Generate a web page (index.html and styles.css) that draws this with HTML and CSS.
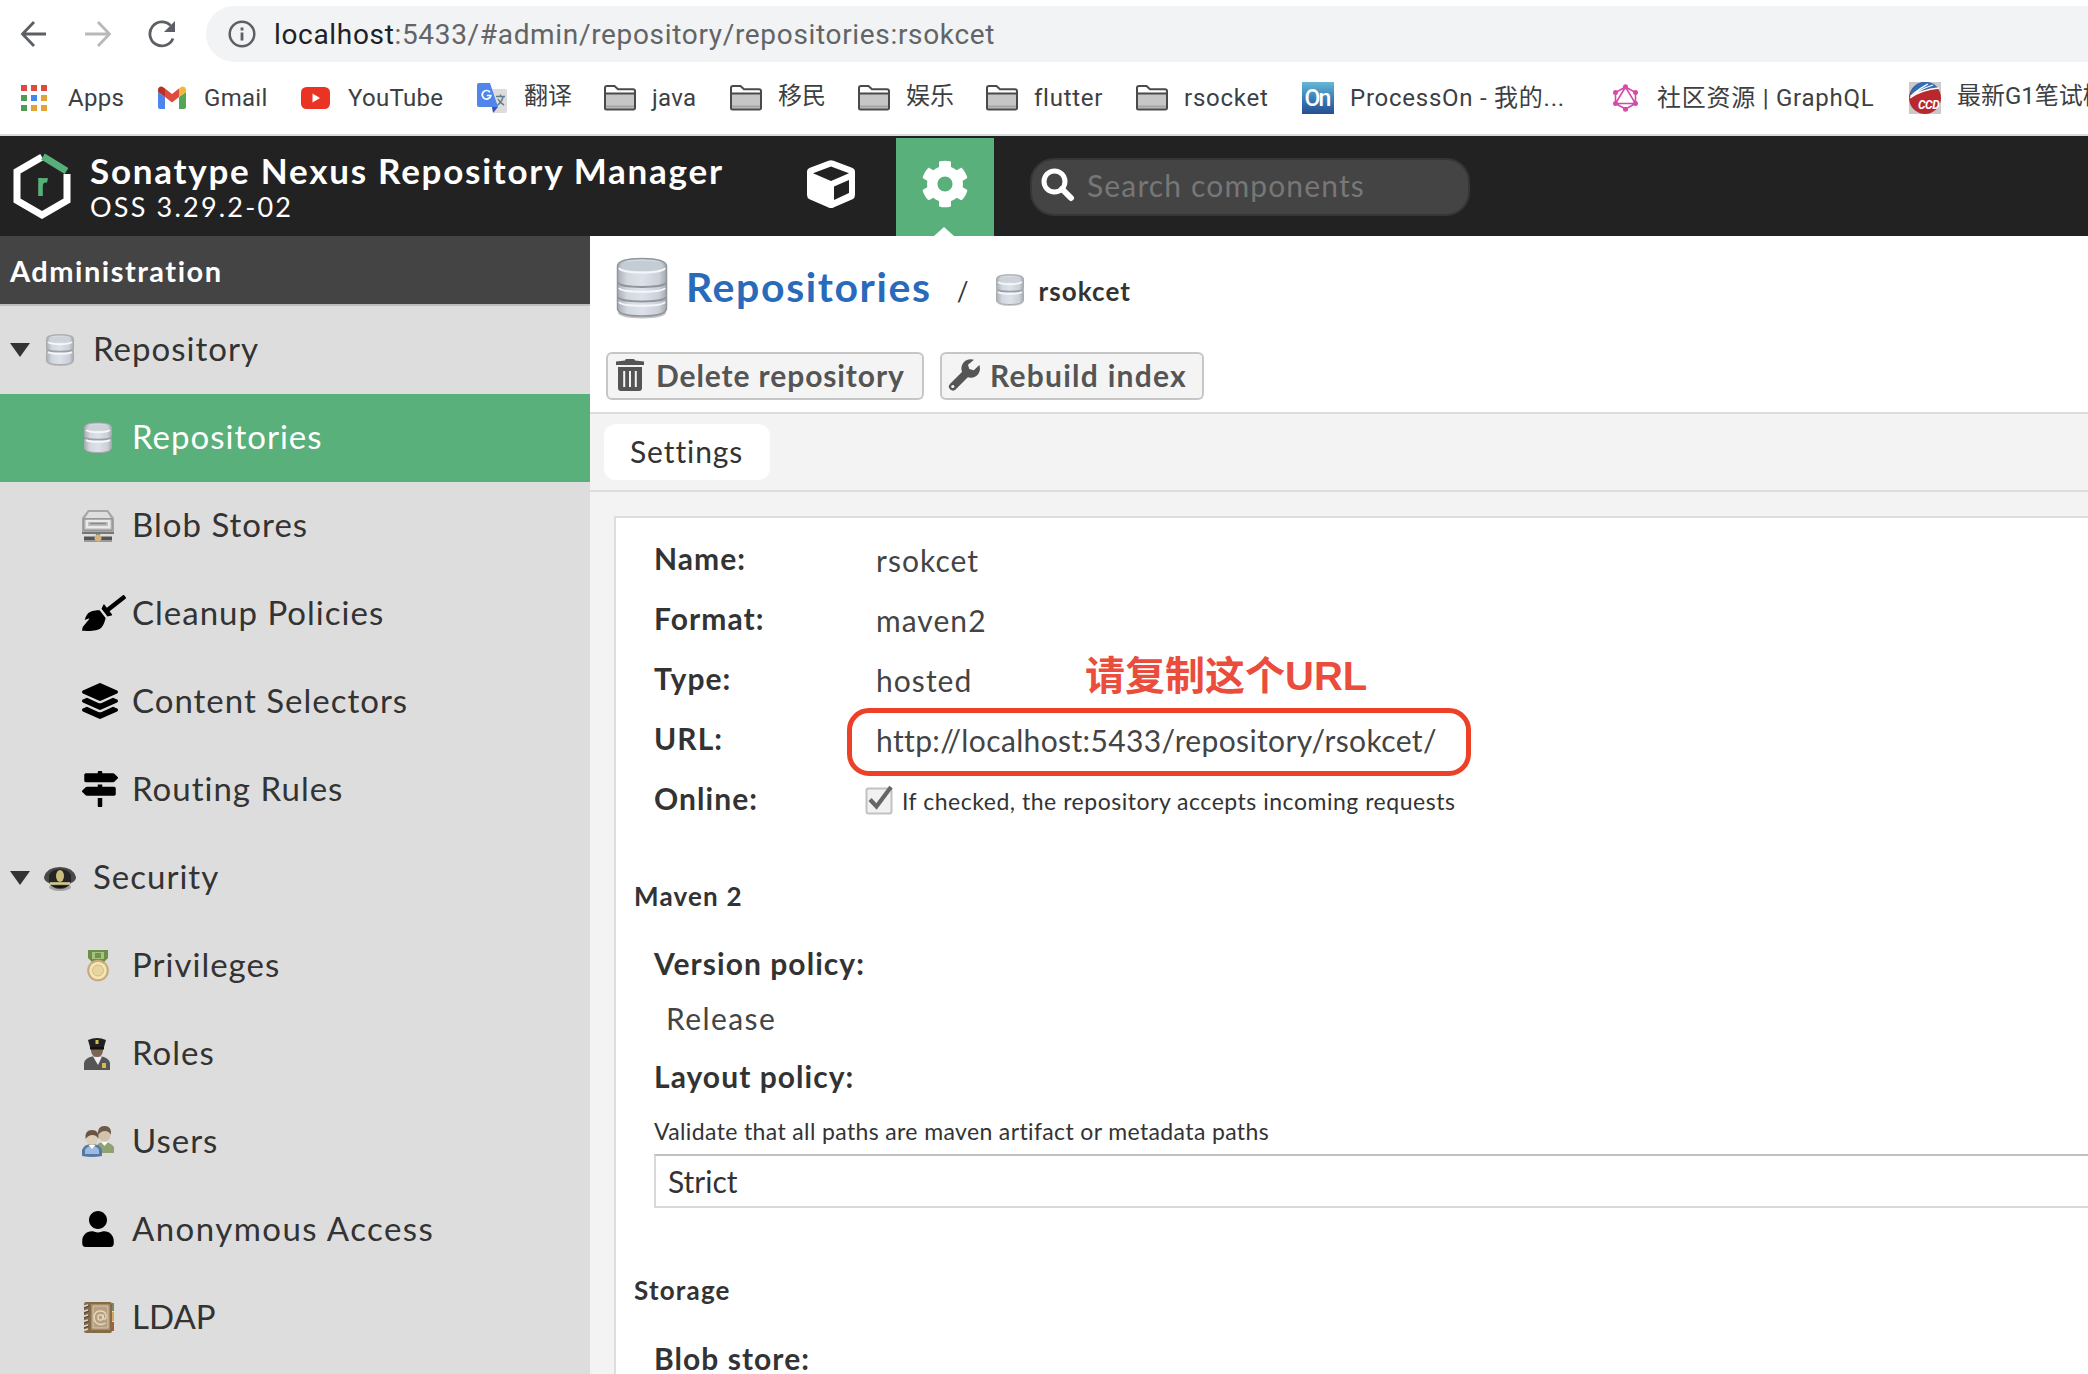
FILE: index.html
```html
<!DOCTYPE html>
<html lang="en">
<head>
<meta charset="utf-8">
<title>Repositories - Nexus Repository Manager</title>
<link rel="stylesheet" href="styles.css">
</head>
<body>
<svg class="defs" width="0" height="0">
  <defs>
    <linearGradient id="metal" x1="0" x2="1" y1="0" y2="0">
      <stop offset="0" stop-color="#a9aeb4"/><stop offset=".2" stop-color="#d3d8df"/><stop offset=".5" stop-color="#dde2ea"/><stop offset=".85" stop-color="#cbd0d8"/><stop offset="1" stop-color="#a4a9ae"/>
    </linearGradient>
    <linearGradient id="on" x1="0" x2="0" y1="0" y2="1">
      <stop offset="0" stop-color="#67b7d6"/><stop offset=".5" stop-color="#3b7fb8"/><stop offset="1" stop-color="#274e91"/>
    </linearGradient>
    <symbol id="folder" viewBox="0 0 32 26">
      <path d="M1.5 22.5V3a1.5 1.5 0 0 1 1.500-1.500h7.500l3 3.300h15.500A1.500 1.500 0 0 1 30.500 6.300v16.700a1.500 1.500 0 0 1-1.500 1.500H3a1.500 1.500 0 0 1-1.500-1.500z" fill="#fff"/>
      <path d="M1.500 9h29v15h-29z" fill="#c6c6c6"/><path d="M2 21.500h28" stroke="#a5a5a5" stroke-width="2"/>
      <path d="M1 8.500h30M1 23V3a2 2 0 0 1 2-2h7.500l3.500 3.200h15a2 2 0 0 1 2 2V23a1.500 1.500 0 0 1-1.500 1.500h-27A1.500 1.500 0 0 1 1 23z" fill="none" stroke="#4a4a4a" stroke-width="2"/>
    </symbol>
    <symbol id="db" viewBox="0 0 32 32">
      <path d="M2 4q1-4 14-4t14 4v23q-1 5-14 5T2 27z" fill="#8d9195" opacity=".45"/>
      <path d="M2.500 5.500C3 2 8 1 16 1s13 1 13.500 4.500v8q0 1.500-1 2.500 1 1 1 2.500V26c-1 3.500-6 4.500-13.500 4.500S3 29.500 2.500 26v-7.500q0-1.500 1-2.500-1-1-1-2.500z" fill="url(#metal)" stroke="#a6abae" stroke-width="1"/>
      <path d="M3.500 16c3 2 22 2 25 0" fill="none" stroke="#9ba0a6" stroke-width="1.600"/>
      <path d="M4 18c4 2.500 20 2.500 24 0M4 8c4 3 20 3 24 0" fill="none" stroke="#f4f7fb" stroke-width="1.800"/>
      <ellipse cx="16" cy="5.600" rx="11" ry="3" fill="#cdd3d8"/>
    </symbol>
    <symbol id="db-large" viewBox="0 0 52 62">
      <ellipse cx="26" cy="56" rx="24" ry="5.500" fill="#777" opacity=".45"/>
      <path d="M1.500 9C2 3 12 1.500 26 1.500S50 3 50.500 9v43c-1 5-11 7-24.500 7S2.500 57 1.500 52z" fill="url(#metal)" stroke="#90969c" stroke-width="1.500"/>
      <ellipse cx="26" cy="9" rx="21.500" ry="5.500" fill="#c5cdd4"/>
      <path d="M3 11c3 6 43 6 46 0M3 31c3 5 43 5 46 0M3 45c3 5 43 5 46 0" fill="none" stroke="#f3f6fa" stroke-width="2"/>
      <path d="M2 25.500c2 6 46 6 48 0M2 40c2 6 46 6 48 0" fill="none" stroke="#8f959b" stroke-width="2"/>
    </symbol>
  </defs>
</svg>

<div class="browser">
  <div class="toolbar">
    <svg class="nav" width="28" height="28" viewBox="0 0 28 28"><path d="M26 14H3M14 2 2.500 14 14 26" fill="none" stroke="#5c5f63" stroke-width="2.800"/></svg>
    <svg class="nav" width="28" height="28" viewBox="0 0 28 28"><path d="M1 14h23M14 2l11.500 12L14 26" fill="none" stroke="#b9b9bb" stroke-width="2.800"/></svg>
    <svg class="nav" width="28" height="28" viewBox="0 0 28 28"><path d="M25 18.500A12 12 0 1 1 22.500 5.500" fill="none" stroke="#5c5f63" stroke-width="2.800"/><path d="M27 1v11H16z" fill="#5c5f63"/></svg>
    <div class="omnibox">
      <svg width="28" height="28" viewBox="0 0 28 28"><circle cx="14" cy="14" r="12.300" fill="none" stroke="#5c5f63" stroke-width="2.500"/><path d="M14 12.500v8M14 7.500v3" stroke="#5c5f63" stroke-width="2.800"/></svg>
      <span class="url"><b>localhost</b>:5433/#admin/repository/repositories:rsokcet</span>
    </div>
  </div>
  <div class="bookmarks">
    <div class="bm"><svg width="32" height="28" viewBox="0 0 32 28"><g fill="#dd4b3e"><path d="M1 1h6v6H1zM11 1h6v6h-6zM21 1h6v6h-6z"/></g><path d="M1 11h6v6H1zM1 21h6v6H1z" fill="#4e9a57"/><path d="M11 11h6v6h-6z" fill="#4285f0"/><path d="M21 11h6v6h-6zM11 21h6v6h-6zM21 21h6v6h-6z" fill="#e2a336"/></svg><span>Apps</span></div>
    <div class="bm"><svg width="32" height="24" viewBox="0 0 32 24"><path d="M2 6l7 5v12H4a2 2 0 0 1-2-2z" fill="#4d84ee"/><path d="M30 6l-7 5v12h5a2 2 0 0 0 2-2z" fill="#53a557"/><path d="M9 2.500l7 5.500 7-5.500V11l-7 5.500L9 11z" fill="#de4b3f"/><path d="M2 4c0-3 3-4.500 5.500-2.500L9 2.500V11L2 6z" fill="#b93228"/><path d="M30 4c0-3-3-4.500-5.500-2.500L23 2.500V11l7-5z" fill="#f0b93c"/></svg><span>Gmail</span></div>
    <div class="bm"><svg width="32" height="22" viewBox="0 0 32 22"><rect x="1" width="29" height="22" rx="5.500" fill="#ea3323"/><path d="M12.500 6.500v9l7.500-4.500z" fill="#fff"/></svg><span>YouTube</span></div>
    <div class="bm"><svg width="32" height="30" viewBox="0 0 32 30"><path d="M12 6h17a2 2 0 0 1 2 2v20a2 2 0 0 1-2 2H18z" fill="#dcdcdc"/><path d="M20 13.500h9M24.500 11.500v2M27 14c-1 4-3 6.500-6 8.500M22 16c1 2 3.500 4.500 6 6" stroke="#607d8b" stroke-width="1.500" fill="none"/><path d="M16 24h6l-5 6z" fill="#3a4fb5"/><path d="M3 0h11l8 24H3a2 2 0 0 1-2-2V2a2 2 0 0 1 2-2z" fill="#5086ec"/><path d="M14 9.200a4.300 4.300 0 1 0 .8 3.300h-4" fill="none" stroke="#fff" stroke-width="1.700"/></svg><span class="cjk">翻译</span></div>
    <div class="bm"><svg width="32" height="26"><use href="#folder"/></svg><span>java</span></div>
    <div class="bm"><svg width="32" height="26"><use href="#folder"/></svg><span class="cjk">移民</span></div>
    <div class="bm"><svg width="32" height="26"><use href="#folder"/></svg><span class="cjk">娱乐</span></div>
    <div class="bm"><svg width="32" height="26"><use href="#folder"/></svg><span class="loose">flutter</span></div>
    <div class="bm"><svg width="32" height="26"><use href="#folder"/></svg><span class="loose">rsocket</span></div>
    <div class="bm"><svg width="32" height="32" viewBox="0 0 32 32"><rect width="32" height="32" fill="url(#on)"/><text x="2.500" y="23.500" class="on-text" textLength="27">On</text></svg><span class="loose">ProcessOn - 我的...</span></div>
    <div class="bm"><svg width="32" height="28" viewBox="0 0 32 28"><g fill="none" stroke="#d64aa9" stroke-width="1.600"><path d="M16.500 3l10 5.500v11l-10 5.500-10-5.500v-11zM16.500 3 6.500 19.500h20z"/></g><g fill="#d64aa9"><circle cx="16.500" cy="2.800" r="2.500"/><circle cx="26.500" cy="8.500" r="2.500"/><circle cx="26.500" cy="19.500" r="2.500"/><circle cx="16.500" cy="25.300" r="2.500"/><circle cx="6.500" cy="19.500" r="2.500"/><circle cx="6.500" cy="8.500" r="2.500"/></g></svg><span class="loose">社区资源 | GraphQL</span></div>
    <div class="bm"><svg width="32" height="32" viewBox="0 0 32 32"><rect width="32" height="32" fill="#c9c9c9"/><circle cx="16" cy="16" r="16" fill="#b8282d"/><path d="M1 14C2 5 8 0 16 0c6 0 10 2 13 6-10 0-20 3-28 8z" fill="#2e6fb8"/><path d="M1.500 14.500C8 8 14 5 19 2M6 12C12 7 18 5 24 3M1 16C10 9 20 7 30 6" stroke="#fff" stroke-width="1.300" fill="none"/><text x="9" y="27" class="ccd-text" textLength="22">CCD</text></svg><span class="cjk">最新G1笔试模</span></div>
  </div>
</div>

<header class="header">
  <svg class="logo" width="58" height="66" viewBox="0 0 58 66"><path d="M29 4 4 18.500v29L29 62l25-14.500V21" fill="none" stroke="#fff" stroke-width="7"/><path d="M30 3.500 53.500 18" stroke="#57b07a" stroke-width="7"/><path d="M27.500 25v18M27.500 33c0-4.500 3-6.500 7-5.500" fill="none" stroke="#57b07a" stroke-width="4.600"/></svg>
  <div class="brand">
    <span class="brand-name">Sonatype Nexus Repository Manager</span>
    <span class="brand-version">OSS 3.29.2-02</span>
  </div>
  <div class="mode">
    <svg width="48" height="48" viewBox="0 0 48 48"><path d="M21.500.7a6 6 0 0 1 5 0l18.500 7A4.500 4.500 0 0 1 48 12v23a5 5 0 0 1-2.500 4.300L27 47.300a6 6 0 0 1-6 0L2.500 39.300A5 5 0 0 1 0 35V12a4.500 4.500 0 0 1 3-4.300zM24 6.500 6 13.300 24 21l18-7.700zM27 26.500V40l15-7V20z" fill="#fff" fill-rule="evenodd"/></svg>
  </div>
  <div class="mode active">
    <svg width="48" height="48" viewBox="0 0 512 512"><path fill="#fff" d="M487.400 315.700l-42.600-24.600c4.300-23.200 4.300-47 0-70.200l42.600-24.600c4.900-2.800 7.100-8.600 5.500-14-11.100-35.600-30-67.800-54.700-94.600-3.800-4.100-10-5.100-14.800-2.300L380.800 110c-17.900-15.400-38.500-27.300-60.800-35.100V25.800c0-5.600-3.900-10.500-9.400-11.700-36.700-8.200-74.300-7.800-109.200 0-5.500 1.200-9.400 6.100-9.400 11.700V75c-22.200 7.900-42.800 19.800-60.800 35.100L88.700 85.500c-4.900-2.800-11-1.900-14.800 2.300-24.700 26.700-43.600 58.900-54.700 94.600-1.700 5.400.6 11.200 5.500 14L67.300 221c-4.300 23.200-4.300 47 0 70.200l-42.600 24.600c-4.900 2.800-7.100 8.600-5.500 14 11.100 35.600 30 67.800 54.700 94.600 3.800 4.100 10 5.100 14.800 2.300l42.600-24.600c17.900 15.400 38.500 27.300 60.800 35.100v49.200c0 5.600 3.900 10.500 9.400 11.700 36.700 8.200 74.300 7.800 109.200 0 5.500-1.200 9.400-6.100 9.400-11.700v-49.200c22.200-7.900 42.800-19.800 60.800-35.100l42.600 24.600c4.900 2.800 11 1.900 14.800-2.300 24.700-26.700 43.600-58.900 54.700-94.600 1.500-5.500-.7-11.300-5.600-14.100zM256 336c-44.100 0-80-35.900-80-80s35.900-80 80-80 80 35.900 80 80-35.900 80-80 80z"/></svg>
  </div>
  <div class="search">
    <svg width="34" height="34" viewBox="0 0 34 34"><circle cx="13.500" cy="13.500" r="10.500" fill="none" stroke="#fff" stroke-width="5"/><path d="M21 21l9 9" stroke="#fff" stroke-width="6" stroke-linecap="round"/></svg>
    <span>Search components</span>
  </div>
</header>

<div class="page">
  <nav class="sidebar">
    <div class="side-title">Administration</div>
    <div class="row group"><i class="arrow"></i><svg width="32" height="32"><use href="#db"/></svg><span>Repository</span></div>
    <div class="row selected"><svg width="32" height="32"><use href="#db"/></svg><span>Repositories</span></div>
    <div class="row"><svg width="32" height="32" viewBox="0 0 32 32"><path d="M6 0h20l6 8v14H0V8z" fill="#a6a6a6"/><path d="M7 2h18l4 6H3z" fill="#dedede"/><path d="M2 9h28v11H2z" fill="#cfcfcf" stroke="#8b8b8b"/><path d="M5 11h22v6H5z" fill="#bdbdbd" stroke="#f3f3f3" stroke-width="1.500"/><path d="M8 13.500h16" stroke="#888" stroke-width="1.500"/><path d="M0 22h32v2H0zM14 23h4v4h-4z" fill="#777"/><path d="M2 26.500h28v4H2z" fill="#555"/><path d="M2 30.500h28V32H2z" fill="#999"/><circle cx="16" cy="28" r="3.500" fill="#cfb47c"/></svg><span>Blob Stores</span></div>
    <div class="row"><svg class="up" width="44" height="36" viewBox="0 0 640 512" preserveAspectRatio="none"><path d="M256.470 216.770l86.730 109.180s-16.600 102.360-76.570 150.120C206.660 523.850 0 510.190 0 510.190s3.800-23.140 11-55.430l94.620-112.170c3.970-4.700-.87-11.620-6.650-9.500l-60.400 22.090c14.440-41.660 32.720-80.040 54.600-97.470 59.970-47.760 163.300-40.940 163.300-40.940zM636.530 31.030l-19.860-25c-5.490-6.900-15.520-8.050-22.410-2.560l-232.480 177.800-34.140-42.970c-5.090-6.410-15.140-5.210-18.590 2.210l-25.330 54.550 86.730 109.180 58.800-12.450c8-1.690 11.420-11.200 6.340-17.600l-34.090-42.920 232.480-177.800c6.890-5.480 8.040-15.530 2.550-22.440z"/></svg><span>Cleanup Policies</span></div>
    <div class="row"><svg class="up" width="36" height="36" viewBox="0 0 512 512"><path d="M12.410 148.020l232.940 105.670c6.800 3.090 14.490 3.090 21.290 0l232.940-105.670c16.550-7.510 16.550-32.520 0-40.030L266.650 2.310a25.607 25.607 0 0 0-21.290 0L12.410 107.980c-16.550 7.510-16.550 32.530 0 40.040zm487.180 88.280l-58.090-26.330-161.640 73.270c-7.560 3.430-15.590 5.170-23.860 5.170s-16.290-1.740-23.860-5.170L70.510 209.970l-58.100 26.330c-16.550 7.500-16.550 32.500 0 40l232.940 105.590c6.800 3.080 14.490 3.080 21.290 0L499.590 276.300c16.550-7.500 16.550-32.500 0-40zm0 127.800l-57.870-26.230-161.860 73.370c-7.560 3.430-15.590 5.170-23.860 5.170s-16.290-1.740-23.860-5.170L70.290 337.870 12.410 364.100c-16.550 7.500-16.550 32.500 0 40l232.940 105.590c6.800 3.080 14.490 3.080 21.290 0L499.590 404.100c16.550-7.500 16.550-32.500 0-40z"/></svg><span>Content Selectors</span></div>
    <div class="row"><svg class="up" width="36" height="36" viewBox="0 0 512 512"><path d="M507.310 84.690L464 41.370c-6-6-14.140-9.370-22.630-9.370H288V16c0-8.840-7.160-16-16-16h-32c-8.840 0-16 7.160-16 16v16H56c-13.250 0-24 10.750-24 24v80c0 13.250 10.750 24 24 24h385.370c8.490 0 16.620-3.370 22.630-9.370l43.310-43.310c6.250-6.260 6.250-16.380 0-22.630zM224 496c0 8.840 7.160 16 16 16h32c8.840 0 16-7.160 16-16V384h-64v112zm232-272H288v-32h-64v32H70.630c-8.490 0-16.620 3.370-22.630 9.370L4.690 276.690c-6.250 6.250-6.250 16.380 0 22.630L48 342.630c6 6 14.140 9.370 22.630 9.370H456c13.250 0 24-10.750 24-24v-80c0-13.250-10.750-24-24-24z"/></svg><span>Routing Rules</span></div>
    <div class="row group"><i class="arrow"></i><svg width="32" height="32" viewBox="0 0 32 32"><ellipse cx="16" cy="25" rx="11" ry="4" fill="#8a8a8a" opacity=".7"/><path d="M0 15Q3 5 16 5t16 10q0 4-5 6-4 6-11 6T5 21q-5-2-5-6z" fill="#4a4a4a"/><path d="M5 13q3-6 11-6t11 6v7H5z" fill="#262626"/><ellipse cx="16" cy="14" rx="4" ry="6" fill="#cbbd7c"/><path d="M7 23.500q9 5 18 0" fill="#111"/><path d="M6 21.500h20" stroke="#d6c98f" stroke-width="2.500"/></svg><span>Security</span></div>
    <div class="row"><svg width="32" height="32" viewBox="0 0 32 32"><path d="M6 0h20v8l-5 5H11L6 8z" fill="#6b8f4a"/><path d="M10 2h12v7H10z" fill="#a5c37d"/><path d="M13 3h6v5h-6z" fill="#6f924d"/><circle cx="16" cy="20.500" r="10.800" fill="#c8a97c"/><circle cx="16" cy="20.500" r="8.800" fill="#f2e6b5"/><circle cx="16" cy="20.500" r="5.500" fill="#e6d69e" stroke="#d3bd83"/></svg><span>Privileges</span></div>
    <div class="row"><svg width="32" height="32" viewBox="0 0 32 32"><path d="M2 32v-7q1-5 8-6.500h10q7 1.500 8 6.500v7z" fill="#555"/><path d="M11 18.500h9L16 27z" fill="#eee"/><path d="M9 8h12v5q-1 6-6 6t-6-6z" fill="#7c6454"/><path d="M6 2q9-4 18 0l-2 7H8z" fill="#202020"/><path d="M8 9h14v2.500H8z" fill="#111"/><path d="M13.500 2h3v4h-3z" fill="#d2bd4c"/><path d="M20 25h4v5h-4z" fill="#d2bd4c"/></svg><span>Roles</span></div>
    <div class="row"><svg width="32" height="32" viewBox="0 0 32 32"><path d="M14 27v-6q2-5 8-5t10 5v6z" fill="#8fa272"/><circle cx="22.500" cy="9.500" r="6" fill="#d3c3aa"/><path d="M16 9q-1-9 6.500-9T29 9q-2-4-6-4t-7 4z" fill="#6f5a47"/><path d="M19 16l3.500 4 3.500-4z" fill="#fff"/><path d="M0 30v-6q2-6 10-6t10 6v6q-10 2-20 0z" fill="#5777a5"/><path d="M3 28v-4q2-4 7-4t7 4v4z" fill="#9dbbe0"/><circle cx="10" cy="13" r="6" fill="#ddd0b8"/><path d="M3.500 13q-1-9 6.500-9t6.500 9q-2-4-6-4t-7 4z" fill="#6a5544"/><path d="M6.500 19l3.500 4 3.500-4z" fill="#fff"/></svg><span>Users</span></div>
    <div class="row"><svg class="up" width="32" height="36" viewBox="0 0 448 512"><path d="M224 256c70.700 0 128-57.300 128-128S294.700 0 224 0 96 57.300 96 128s57.300 128 128 128zm89.600 32h-16.700c-22.200 10.200-46.900 16-72.900 16s-50.600-5.800-72.900-16h-16.700C60.200 288 0 348.200 0 422.400V464c0 26.500 21.500 48 48 48h352c26.500 0 48-21.500 48-48v-41.600c0-74.200-60.200-134.400-134.400-134.400z"/></svg><span class="anonymous">Anonymous Access</span></div>
    <div class="row"><svg width="32" height="32" viewBox="0 0 32 32"><rect x="2" width="28" height="31" rx="2" fill="#866b48"/><path d="M9 2h19v26H9z" fill="#a58c68"/><path d="M11 4h15v22H11z" fill="#b8a080" stroke="#d6c6aa"/><path d="M30 1h2v8h-2z" fill="#7c8a5a"/><path d="M30 10h2v9h-2z" fill="#d0a860"/><path d="M30 20h2v9h-2z" fill="#a0603c"/><path d="M0 5l6-2M0 10l6-2M0 15l6-2M0 20l6-2M0 25l6-2M0 29l6-2" stroke="#d8d8d8" stroke-width="1.800"/><path d="M2 6l5-2M2 11l5-2M2 16l5-2M2 21l5-2M2 26l5-2" stroke="#444" stroke-width="1"/><circle cx="18.500" cy="15.500" r="2.600" fill="none" stroke="#e6dbc4" stroke-width="1.300"/><path d="M21.200 12.500v4q2.500 1.500 3-1.500 0-6-5.700-6.200-6.300.4-6.500 6.700.5 6.500 6.500 7 3 0 5-1.500" fill="none" stroke="#e6dbc4" stroke-width="1.300"/></svg><span class="ldap">LDAP</span></div>
  </nav>

  <main class="main">
    <div class="crumbs">
      <svg class="crumb-large" width="52" height="62"><use href="#db-large"/></svg>
      <span class="crumb-title">Repositories</span>
      <span class="slash">/</span>
      <svg class="crumb-small" width="32" height="32"><use href="#db"/></svg>
      <span class="crumb-name">rsokcet</span>
    </div>
    <div class="actions">
      <button class="btn delete"><svg width="28" height="32" viewBox="0 0 28 32"><path d="M0 2.500 9 1.500Q9 0 10.500 0h7Q19 0 19 1.500l9 1V6H0z" fill="#555"/><path d="M2 8h24v21a3 3 0 0 1-3 3H5a3 3 0 0 1-3-3z" fill="#555"/><path d="M8.200 12v16M14 12v16M19.800 12v16" stroke="#f4f4f4" stroke-width="2"/></svg><span>Delete repository</span></button>
      <button class="btn rebuild"><svg width="32" height="32" viewBox="0 0 32 32"><path d="M18.500 14 5 27.500" stroke="#555" stroke-width="8" stroke-linecap="round"/><path d="M26 .8A9.300 9.300 0 1 0 31.300 6l-5.500 5.200-4.500-1.200L20 5.800z" fill="#555"/><circle cx="4.800" cy="27.500" r="1.600" fill="#f4f4f4"/></svg><span>Rebuild index</span></button>
    </div>
    <div class="tabs"><div class="tab">Settings</div></div>
    <div class="content">
      <div class="panel">
        <div class="field"><label>Name:</label><span class="value">rsokcet</span></div>
        <div class="field"><label>Format:</label><span class="value">maven2</span></div>
        <div class="field"><label>Type:</label><span class="value">hosted</span><span class="note">请复制这个URL</span></div>
        <div class="field"><label>URL:</label><span class="value url-value">http://localhost:5433/repository/rsokcet/</span><i class="highlight"></i></div>
        <div class="field"><label>Online:</label><svg class="check" width="30" height="30" viewBox="0 0 30 30"><rect x="1.500" y="3.500" width="25" height="25" rx="2" fill="#f1f1f1" stroke="#c2c2c2" stroke-width="2"/><path d="M5 14.500l6.500 7L26 2" fill="none" stroke="#666" stroke-width="4.200"/></svg><span class="hint">If checked, the repository accepts incoming requests</span></div>
        <h3 class="section">Maven 2</h3>
        <div class="group-fields">
          <div class="label version">Version policy:</div>
          <div class="plain">Release</div>
          <div class="label layout">Layout policy:</div>
          <div class="help">Validate that all paths are maven artifact or metadata paths</div>
          <div class="combo">Strict</div>
        </div>
        <h3 class="section storage">Storage</h3>
        <div class="group-fields">
          <div class="label blob">Blob store:</div>
        </div>
      </div>
    </div>
  </main>
</div>
</body>
</html>
```
FILE: styles.css
```css
* { box-sizing: border-box; }
body {
  margin: 0;
  width: 2088px;
  height: 1374px;
  overflow: hidden;
  background: #fff;
  color: #333;
  font-family: Lato, "Noto Sans CJK SC", sans-serif;
  white-space: nowrap;
}
svg { display: block; flex: none; }
.defs { position: absolute; }

/* Browser chrome */
.browser { height: 136px; border-bottom: 2px solid #d9dade; font-family: Roboto, "Noto Sans CJK SC", sans-serif; }
.toolbar { display: flex; align-items: center; height: 68px; padding-left: 20px; }
.nav { margin-right: 36px; }
.omnibox {
  display: flex; align-items: center; flex: 1; gap: 18px;
  height: 56px; margin-left: -6px; padding-left: 22px;
  border-radius: 28px 0 0 28px; background: #f1f3f4;
}
.url { font-size: 28px; color: #636466; letter-spacing: .67px; }
.url b { font-weight: 400; color: #202124; }
.bookmarks {
  display: grid; align-items: center; height: 60px;
  grid-template-columns: 136px 144px 176px 128px 126px 128px 128px 150px 166px 307px 300px 200px;
  padding-left: 20px;
}
.bm { display: flex; align-items: center; gap: 16px; font-size: 24px; line-height: 28px; color: #3c4043; letter-spacing: .3px; }
.bm .cjk { letter-spacing: 0; padding-bottom: 4px; }
.bm .loose { letter-spacing: .75px; }
.on-text { font: 500 23px Roboto, sans-serif; fill: #fff; }
.ccd-text { font: italic 700 12px Roboto, sans-serif; fill: #fff; }

/* Application header */
.header { display: flex; height: 100px; background: #222; color: #fff; }
.logo { margin: 17px 0 0 13px; }
.brand { display: flex; flex: none; flex-direction: column; width: 688px; padding: 14px 0 0 19px; }
.brand-name { font-size: 35px; line-height: 40px; font-weight: 700; letter-spacing: 1.75px; }
.brand-version { font-size: 27px; line-height: 34px; letter-spacing: 2.2px; }
.mode { display: flex; flex: none; align-items: center; justify-content: center; width: 98px; height: 98px; margin: 2px 16px 0 23px; padding-bottom: 6px; }
.mode.active { position: relative; margin: 2px 36px 0 0; background: #59b07a; }
.mode.active::after {
  content: ""; position: absolute; left: 38px; bottom: 0;
  border: 10px solid transparent; border-top: 0; border-bottom: 9px solid #fff;
}
.search {
  display: flex; align-items: center; gap: 12px;
  width: 440px; height: 58px; margin-top: 22px; padding: 0 0 4px 9px;
  border: 2px solid #363636; border-radius: 24px; background: #444;
  color: #777; font-size: 30px; letter-spacing: 1.15px;
}

/* Page */
.page { display: flex; height: 1138px; }
.sidebar { flex: none; width: 590px; background: #ddd; }
.side-title { height: 70px; padding-left: 10px; border-bottom: 2px solid #bdbdbd; background: #444; color: #fff; font-size: 29px; font-weight: 700; line-height: 69px; letter-spacing: 1.5px; }
.row { display: grid; grid-template-columns: 50px auto; align-items: center; justify-content: start; height: 88px; padding-left: 82px; font-size: 33px; letter-spacing: 1px; }
.row span { padding-bottom: 5px; }
.row.group { grid-template-columns: 34px 49px auto; padding-left: 10px; }
.row.selected { background: #59b07a; color: #fff; }
.row .anonymous { letter-spacing: 1.45px; }
.row .ldap { letter-spacing: 0; }
.up { margin-bottom: 3px; }
.arrow { width: 20px; height: 14px; background: #333; clip-path: polygon(0 0, 100% 0, 50% 100%); }

.main { display: flex; flex-direction: column; flex: 1; min-width: 0; }
.crumbs { display: flex; flex: none; align-items: center; height: 104px; padding-left: 26px; font-weight: 700; }
.crumb-title { margin-left: 18px; padding-bottom: 4px; font-size: 41px; color: #2a6abb; letter-spacing: 1.6px; }
.slash { margin: 5px 0 0 25px; font-size: 26px; font-weight: 400; }
.crumb-small { margin: 4px 0 0 26px; }
.crumb-name { margin: 5px 0 0 12px; font-size: 26px; letter-spacing: 1.1px; }
.actions { display: flex; flex: none; gap: 16px; height: 74px; padding: 12px 0 0 16px; border-bottom: 2px solid #ddd; }
.btn {
  display: flex; align-items: center; height: 48px; padding: 0 0 2px 8px;
  border: 2px solid #c6c6c6; border-radius: 6px; background: #f4f4f4;
  color: #555; font: 700 30px Lato, sans-serif; white-space: nowrap;
}
.delete { width: 318px; gap: 12px; letter-spacing: .9px; }
.rebuild { width: 264px; padding-left: 6px; gap: 10px; letter-spacing: 1.25px; }
.tabs { flex: none; height: 78px; padding: 10px 0 0 14px; border-bottom: 2px solid #ddd; background: #f3f3f3; }
.tab { width: 166px; height: 56px; padding-left: 26px; border-radius: 12px; background: #fff; font-size: 30px; line-height: 54px; letter-spacing: .9px; }
.content { flex: 1; min-height: 0; padding: 24px 0 0 24px; background: #f3f3f3; }
.panel { height: 100%; padding: 10px 0 0 18px; border: 2px solid #ddd; border-width: 2px 0 0 2px; background: #fff; overflow: hidden; }

.field { position: relative; display: grid; grid-template-columns: 222px auto auto; align-items: center; justify-content: start; height: 60px; padding-left: 20px; font-size: 30px; }
.field label, .label { font-weight: 700; letter-spacing: 1.05px; }
.field .value { color: #444; padding-top: 4px; letter-spacing: 1.05px; }
.field .url-value { letter-spacing: .37px; }
.field .check { margin: 4px 0 0 -11px; }
.field .hint { margin: 5px 0 0 7px; font-size: 23px; letter-spacing: .52px; }
.note { position: absolute; left: 451px; top: 3px; color: #ea4d3c; font: 700 40px "Liberation Sans", "Noto Sans CJK SC", sans-serif; line-height: 50px; }
.highlight { position: absolute; left: 213px; top: 0; width: 624px; height: 68px; border: 5px solid #ee4027; border-radius: 22px; }

.section { height: 40px; margin: 48px 0 0; font-size: 26px; line-height: 40px; letter-spacing: 1.2px; }
.group-fields { padding-left: 20px; }
.label { height: 40px; font-size: 30px; line-height: 40px; }
.version { margin-top: 27px; }
.plain { height: 40px; margin-top: 15px; padding-left: 12px; font-size: 30px; line-height: 40px; color: #444; letter-spacing: 1.4px; }
.layout { margin-top: 18px; }
.help { height: 30px; margin-top: 20px; font-size: 23px; line-height: 30px; letter-spacing: .37px; }
.combo { height: 54px; margin-top: 8px; padding-left: 12px; border: 2px solid #d9d9d9; border-top-color: #c0c0c0; border-right: 0; font-size: 30px; line-height: 50px; }
.storage { margin-top: 62px; }
.blob { margin-top: 28px; }
```
